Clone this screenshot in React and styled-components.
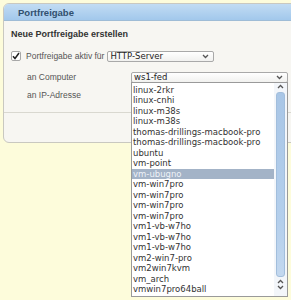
import React from 'react';
import styled, { createGlobalStyle } from 'styled-components';

const GlobalStyle = createGlobalStyle`
  body {
    margin: 0;
    background: #fdfcdb;
    font-family: 'Liberation Sans', Arial, sans-serif;
  }
`;

const Page = styled.div`
  height: 300px;
  padding-top: 3px;
  box-sizing: border-box;
  overflow: hidden;
`;

const Panel = styled.section`
  position: relative;
  margin-left: 3px;
  width: 320px;
  border: 1px solid #c9c8c0;
  border-radius: 6px;
  background: #f7f6f2;
`;

const Header = styled.h2`
  margin: 0;
  height: 16px;
  padding-left: 14px;
  border-bottom: 1px solid #9fbcd6;
  border-radius: 5px 5px 0 0;
  background: linear-gradient(#c2dcf3, #a2c8ec);
  color: #31506e;
  font-size: 9.5px;
  font-weight: bold;
  line-height: 17px;
`;

const Body = styled.div`
  padding: 7px 0 11px 7px;
  border-bottom: 1px solid #d9d8d0;
`;

const Title = styled.h3`
  margin: 0;
  height: 12px;
  color: #333;
  font-size: 9px;
  font-weight: bold;
  line-height: 12px;
`;

const CheckRow = styled.div`
  display: flex;
  align-items: center;
  height: 12px;
  margin-top: 10px;
`;

const Check = styled.span`
  display: flex;
  align-items: center;
  justify-content: center;
  width: 8px;
  height: 8px;
  border: 1px solid #a8a8a8;
  border-radius: 2px;
  background: #fff;
  margin-right: 5px;
`;

const Label = styled.span`
  color: #555;
  font-size: 8.5px;
  line-height: 12px;
  white-space: nowrap;
`;

const FieldRow = styled.div`
  display: grid;
  grid-template-columns: 104px 157px;
  align-items: center;
  height: 12px;
  margin-top: ${p => p.gap}px;
  padding-left: 16px;
`;

const SelectBox = styled.div`
  position: relative;
  display: flex;
  align-items: center;
  justify-content: space-between;
  box-sizing: border-box;
  width: ${p => p.w}px;
  height: 11px;
  margin-left: ${p => p.ml || 0}px;
  padding: 0 4px 0 ${p => p.pl}px;
  border: 1px solid #a9a9a9;
  border-radius: 2px;
  background: linear-gradient(#ffffff, #f1f1ef);
  color: #222;
  font-family: 'DejaVu Sans', sans-serif;
  font-size: 8.5px;
  line-height: 10px;
`;

const Footer = styled.div`
  height: 29px;
`;

const Dropdown = styled.div`
  position: absolute;
  top: 100%;
  left: -1px;
  z-index: 5;
  display: flex;
  box-sizing: border-box;
  width: 157px;
  height: 215px;
  border: 1px solid #9a9a9a;
  background: #fff;
  overflow: hidden;
`;

const Options = styled.ul`
  flex: 1;
  margin: 0;
  padding: 2px 0 0;
  list-style: none;
`;

const Option = styled.li`
  height: 10.5px;
  padding-left: 1px;
  background: ${p => (p.active ? '#a3b3c7' : 'transparent')};
  color: ${p => (p.active ? '#eef2f7' : '#333')};
  font-family: 'DejaVu Sans', sans-serif;
  font-size: 8.5px;
  line-height: 10.5px;
  white-space: nowrap;
`;

const Scroll = styled.div`
  display: flex;
  flex-direction: column;
  align-items: center;
  width: 13px;
  padding-bottom: 5px;
  background: #f3f6fa;
`;

const Arrow = styled.span`
  display: flex;
  align-items: center;
  justify-content: center;
  height: ${p => p.h || 6}px;
`;

const Thumb = styled.div`
  flex: 1;
  width: 7px;
  margin: 1px 0 2px;
  border: 1px solid #a2bedc;
  border-radius: 3px;
  background: linear-gradient(#a9c6e6, #b4cfec 70%, #c3d8ef);
`;

const Chevron = ({ up }) => (
  <svg width="7" height="5" viewBox="0 0 7 5">
    <polyline
      points={up ? '1,4 3.5,1.5 6,4' : '1,1 3.5,3.5 6,1'}
      fill="none"
      stroke="#555"
      strokeWidth="1.3"
    />
  </svg>
);

const hosts = [
  'linux-2rkr',
  'linux-cnhi',
  'linux-m38s',
  'linux-m38s',
  'thomas-drillings-macbook-pro',
  'thomas-drillings-macbook-pro',
  'ubuntu',
  'vm-point',
  'vm-ubugno',
  'vm-win7pro',
  'vm-win7pro',
  'vm-win7pro',
  'vm-win7pro',
  'vm1-vb-w7ho',
  'vm1-vb-w7ho',
  'vm1-vb-w7ho',
  'vm2-win7-pro',
  'vm2win7kvm',
  'vm_arch',
  'vmwin7pro64ball',
];

export default function App() {
  return (
    <Page>
      <GlobalStyle />
      <Panel>
        <Header>Portfreigabe</Header>
        <Body>
          <Title>Neue Portfreigabe erstellen</Title>
          <CheckRow>
            <Check>
              <svg width="8" height="8" viewBox="0 0 8 8">
                <polyline points="1,4.2 3,6.5 7,1" fill="none" stroke="#222" strokeWidth="1.5" />
              </svg>
            </Check>
            <Label>Portfreigabe aktiv für</Label>
            <SelectBox w={107} pl={2} ml={3}>
              HTTP-Server
              <Chevron />
            </SelectBox>
          </CheckRow>
          <FieldRow gap={9}>
            <Label>an Computer</Label>
            <SelectBox w={157} pl={2}>
              ws1-fed
              <Chevron />
              <Dropdown>
                <Options>
                  {hosts.map((h, i) => (
                    <Option key={i} active={h === 'vm-ubugno'}>{h}</Option>
                  ))}
                </Options>
                <Scroll>
                  <Arrow h={8}><Chevron up /></Arrow>
                  <Thumb />
                  <Arrow><Chevron up /></Arrow>
                  <Arrow><Chevron /></Arrow>
                </Scroll>
              </Dropdown>
            </SelectBox>
          </FieldRow>
          <FieldRow gap={6}>
            <Label>an IP-Adresse</Label>
          </FieldRow>
        </Body>
        <Footer />
      </Panel>
    </Page>
  );
}
